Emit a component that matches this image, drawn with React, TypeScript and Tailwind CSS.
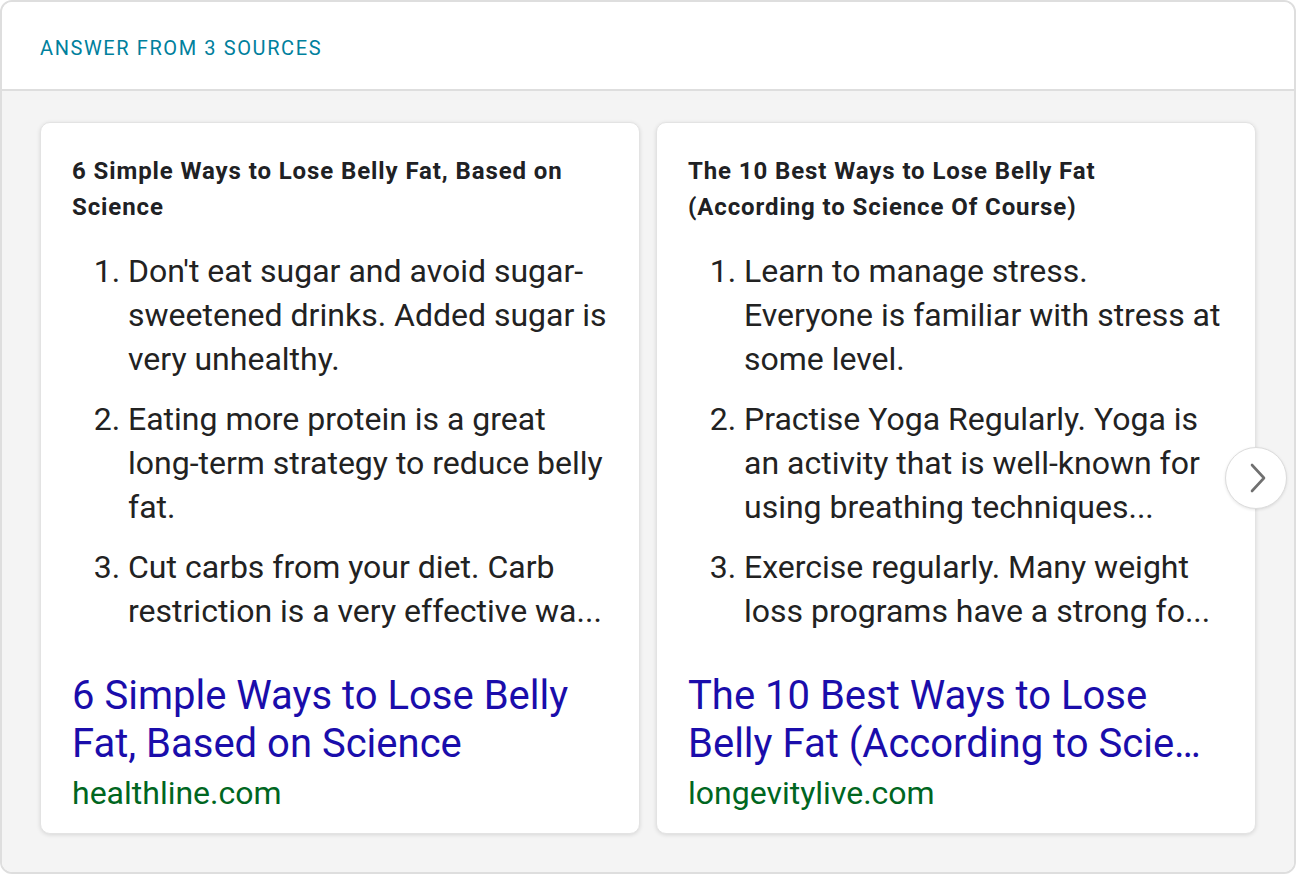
interface Source {
  heading: string;
  items: string[];
  linkTitle: string;
  domain: string;
}

const sources: Source[] = [
  {
    heading: '6 Simple Ways to Lose Belly Fat, Based on Science',
    items: [
      "Don't eat sugar and avoid sugar-sweetened drinks. Added sugar is very unhealthy.",
      'Eating more protein is a great long-term strategy to reduce belly fat.',
      'Cut carbs from your diet. Carb restriction is a very effective wa...',
    ],
    linkTitle: '6 Simple Ways to Lose Belly Fat, Based on Science',
    domain: 'healthline.com',
  },
  {
    heading: 'The 10 Best Ways to Lose Belly Fat (According to Science Of Course)',
    items: [
      'Learn to manage stress. Everyone is familiar with stress at some level.',
      'Practise Yoga Regularly. Yoga is an activity that is well-known for using breathing techniques...',
      'Exercise regularly. Many weight loss programs have a strong fo...',
    ],
    linkTitle: 'The 10 Best Ways to Lose Belly Fat (According to Scie…',
    domain: 'longevitylive.com',
  },
];

function SourceCard({ source }: { source: Source }) {
  return (
    <div className="w-[600px] h-[712px] shrink-0 flex flex-col bg-white rounded-[10px] border border-[#e3e3e3] shadow-[0_1px_4px_rgba(0,0,0,0.12)] pl-[31px] pr-8 pt-[30px] pb-[22px]">
      <h3 className="text-[24px] leading-[36px] font-bold tracking-[0.9px] text-[#202124]">{source.heading}</h3>

      <ol className="mt-6 list-decimal pl-14 text-[32px] leading-[44px] text-[#222] space-y-4">
        {source.items.map((item, i) => (
          <li key={i}>
            <span className="line-clamp-3">{item}</span>
          </li>
        ))}
      </ol>

      {/* Link to source */}
      <div className="mt-auto">
        <a className="text-[40px] leading-[48px] text-[#1a0dab] line-clamp-2">{source.linkTitle}</a>
        <div className="mt-[7px] text-[32px] leading-[36px] text-[#006621]">{source.domain}</div>
      </div>
    </div>
  );
}

export default function App() {
  return (
    <div className="w-[1296px] h-[874px] font-['Roboto',sans-serif]">
      <div className="h-full rounded-[12px] border-2 border-[#dedede] overflow-hidden flex flex-col">
        {/* Header */}
        <div className="h-[89px] shrink-0 bg-white border-b-2 border-[#dedede] px-[38px] pt-[5px] flex items-center">
          <span className="text-[20px] text-[#00809d] tracking-[1.6px]">ANSWER FROM 3 SOURCES</span>
        </div>

        {/* Cards */}
        <div className="relative flex-1 bg-[#f4f4f4] pl-[38px] pt-[31px]">
          <div className="flex gap-4">
            {sources.map((s) => (
              <SourceCard key={s.domain} source={s} />
            ))}
          </div>
          <button className="absolute left-[1223px] top-[356px] w-[62px] h-[62px] rounded-full bg-white border border-[#dcdcdc] shadow-[0_1px_3px_rgba(0,0,0,0.1)] flex items-center justify-center">
            <svg width="18" height="30" viewBox="0 0 18 30" fill="none" className="ml-[3px]">
              <polyline points="3,2 15,15 3,28" stroke="#707070" strokeWidth="2.6" strokeLinecap="round" strokeLinejoin="round" />
            </svg>
          </button>
        </div>
      </div>
    </div>
  );
}
